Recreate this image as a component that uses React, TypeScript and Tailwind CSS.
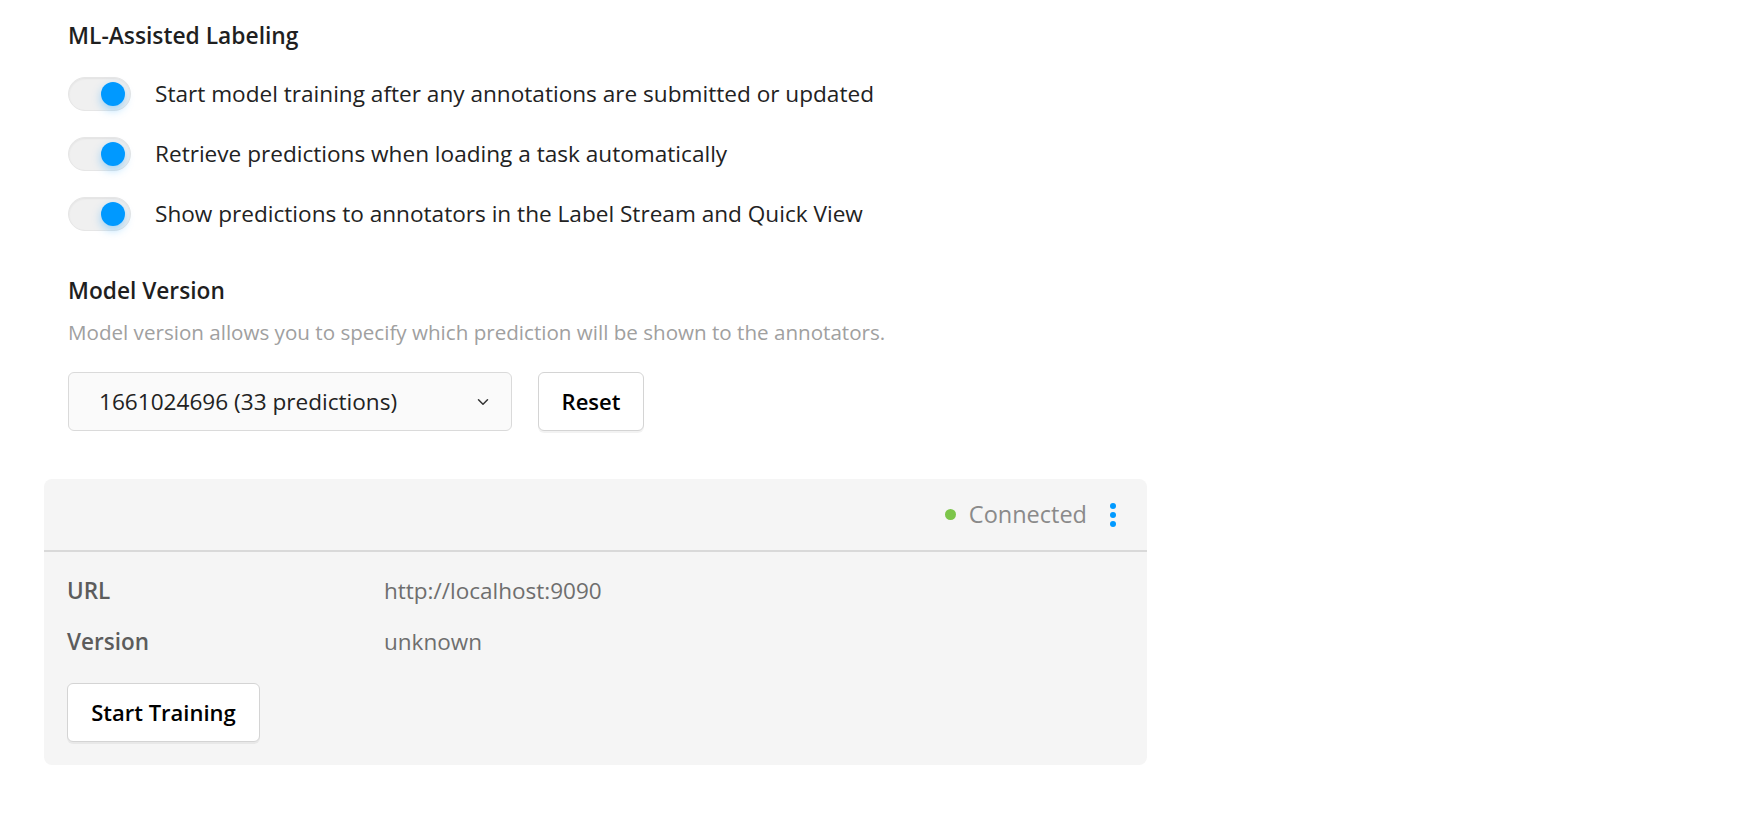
import { ChevronDown } from 'lucide-react'

const toggles = [
  'Start model training after any annotations are submitted or updated',
  'Retrieve predictions when loading a task automatically',
  'Show predictions to annotators in the Label Stream and Quick View',
]

function Toggle() {
  return (
    <div className="relative w-[63px] h-[34px] shrink-0 rounded-full bg-[#f0f0f0] border border-[#e6e6e6] shadow-[inset_0_1px_2px_rgba(0,0,0,0.06)]">
      <div className="absolute right-[5px] top-[4px] w-[24px] h-[24px] rounded-full bg-[#0099ff] shadow-[0_4px_10px_rgba(0,153,255,0.35)]"></div>
    </div>
  )
}

export default function App() {
  return (
    <div
      className="min-h-screen bg-white text-[#1f1f1f]"
      style={{ fontFamily: '"Segoe UI", "Open Sans", "Noto Sans", sans-serif' }}
    >
      <div className="w-[1103px] ml-[44px] pt-[20px]">
        {/* ML-Assisted Labeling */}
        <div className="px-[24px]">
          <h3 className="text-[22.8px] leading-[32px] font-semibold">ML-Assisted Labeling</h3>
          <div className="mt-[25px] flex flex-col gap-[26px]">
            {toggles.map((label) => (
              <div key={label} className="flex items-center h-[34px]">
                <Toggle />
                <span className="ml-[24px] text-[22.6px] leading-[32px] text-[#222]">{label}</span>
              </div>
            ))}
          </div>

          {/* Model Version */}
          <h3 className="mt-[44px] text-[22.7px] leading-[32px] font-semibold">Model Version</h3>
          <p className="mt-[11px] text-[20.6px] leading-[28px] text-[#a0a0a0]">
            Model version allows you to specify which prediction will be shown to the annotators.
          </p>
          <div className="mt-[26px] flex items-center gap-[26px]">
            <div className="w-[444px] h-[59px] flex items-center justify-between pl-[30px] pr-[19px] rounded-[6px] border border-[#dadada] bg-[#fafafa]">
              <span className="text-[22.6px] text-[#222]">1661024696 (33 predictions)</span>
              <ChevronDown className="w-[18px] h-[18px] text-[#333]" strokeWidth={2} />
            </div>
            <button className="w-[106px] h-[59px] rounded-[6px] border border-[#d4d4d4] bg-white shadow-[0_2px_0_rgba(0,0,0,0.05)] text-[22px] font-semibold text-black">
              Reset
            </button>
          </div>
        </div>

        {/* ML backend card */}
        <div className="mt-[48px] rounded-[8px] bg-[#f5f5f5]">
          <div className="h-[73px] flex items-center justify-end pr-[30px] border-b-2 border-[#d9d9d9]">
            <div className="flex items-center">
              <span className="w-[11px] h-[11px] rounded-full bg-[#7cc54a]"></span>
              <span className="ml-[13px] text-[23.5px] text-[#8a8a8a]">Connected</span>
            </div>
            <button className="ml-[22px] flex flex-col gap-[3px] px-[1px]">
              <span className="w-[6px] h-[6px] rounded-full bg-[#0099ff]"></span>
              <span className="w-[6px] h-[6px] rounded-full bg-[#0099ff]"></span>
              <span className="w-[6px] h-[6px] rounded-full bg-[#0099ff]"></span>
            </button>
          </div>
          <div className="px-[23px] pt-[23px] pb-[23px]">
            <div className="grid grid-cols-[317px_1fr] gap-y-[19px] text-[22.5px] leading-[32px]">
              <span className="font-semibold text-[#5c5c5c]">URL</span>
              <span className="text-[#6e6e6e]">http://localhost:9090</span>
              <span className="font-semibold text-[#5c5c5c]">Version</span>
              <span className="text-[#6e6e6e]">unknown</span>
            </div>
            <button className="mt-[25px] w-[193px] h-[59px] rounded-[6px] border border-[#d4d4d4] bg-white shadow-[0_2px_0_rgba(0,0,0,0.05)] text-[22px] font-semibold text-black">
              Start Training
            </button>
          </div>
        </div>
      </div>
    </div>
  )
}
